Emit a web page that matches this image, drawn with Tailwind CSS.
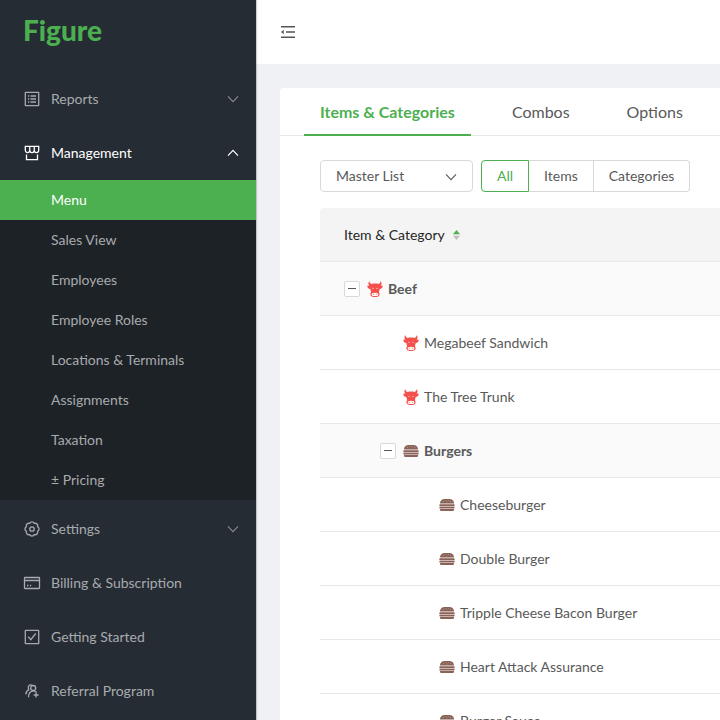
<!DOCTYPE html>
<html lang="en">
<head>
<meta charset="utf-8">
<meta name="viewport" content="width=device-width, initial-scale=1">
<title>Figure – Menu</title>
<script src="https://cdn.jsdelivr.net/npm/@tailwindcss/browser@4"></script>
</head>
<body class="h-screen overflow-hidden bg-[#f0f1f5] font-['Lato','Noto_Sans',sans-serif] text-sm leading-6 text-[#595959]">
<svg class="hidden" aria-hidden="true">
  <symbol id="down" viewBox="0 0 12 12"><path d="M1 3.300 6 8.700l5-5.400" fill="none" stroke="currentColor" stroke-width="1.100"/></symbol>
  <symbol id="up" viewBox="0 0 12 12"><path d="M1 8.700 6 3.300l5 5.400" fill="none" stroke="currentColor" stroke-width="1.200"/></symbol>
  <symbol id="cow" viewBox="0 0 16 16">
    <path fill="#f4504c" d="M2.300 0C1 2 1.200 3.600 2.400 4.600L.2 4.800C.5 7 1.600 8 3.300 8.100l.8 3.100C3.400 12 3.200 13 3.500 14c.5 1.400 2.100 2 4.500 2s4-.6 4.500-2c.3-1 .1-2-.6-2.800l.8-3.100C14.400 8 15.500 7 15.800 4.800l-2.200-.2C14.800 3.600 15 2 13.700 0c-.1 1.500-.8 2.500-2.200 2.900C9.300 2.300 6.700 2.300 4.500 2.900 3.100 2.500 2.400 1.500 2.300 0z"/>
    <ellipse cx="8" cy="13.400" rx="3.400" ry="1.600" fill="#fff"/>
    <circle cx="6" cy="7.300" r=".55" fill="#fff"/><circle cx="10" cy="7.300" r=".55" fill="#fff"/>
    <circle cx="6.700" cy="13.200" r=".5" fill="#f4504c"/><circle cx="9.300" cy="13.200" r=".5" fill="#f4504c"/>
  </symbol>
  <symbol id="burger" viewBox="0 0 16 16">
    <g fill="#8a6257"><path d="M1 6.500C1 3.500 3 2 5.500 2h5C13 2 15 3.500 15 6.500z"/><rect x=".3" y="7.200" width="15.400" height="2" rx=".8"/><rect x=".3" y="9.800" width="15.400" height="1.700" rx=".7"/><path d="M1 12.100h14v.4c0 1-.6 1.500-1.600 1.500H2.600C1.600 14 1 13.500 1 12.500z"/></g>
    <g fill="#d8c6c0"><circle cx="4.500" cy="4.300" r=".45"/><circle cx="6.800" cy="3.400" r=".45"/><circle cx="8" cy="4.900" r=".45"/><circle cx="9.300" cy="3.400" r=".45"/><circle cx="11.500" cy="4.300" r=".45"/></g>
  </symbol>
</svg>
<div class="flex h-full">
  <aside class="relative z-10 w-64 shrink-0 bg-[#262c34] text-[#a8abae] shadow-[1px_0_1px_rgba(0,21,41,0.2)]">
    <a href="#" class="flex h-[72px] items-start px-[23px] pt-3 text-[28px] leading-9 font-black text-[#4caf50]">Figure</a>
    <nav aria-label="Main">
      <button type="button" aria-expanded="false" class="flex h-[54px] w-full items-center gap-[11px] pr-[17px] pl-6 text-left">
        <svg class="size-4 shrink-0 overflow-visible" viewBox="0 0 16 16" fill="none" stroke="currentColor" stroke-width="1.300"><rect x="1.300" y="1.300" width="13.400" height="13.400" rx=".5"/><path d="M6.500 5h5.500M6.500 8h5.500M6.500 11h5.500M4 5h1.300M4 8h1.300M4 11h1.300"/></svg>
        <span class="grow">Reports</span><svg class="size-3 text-[#868b90]"><use href="#down"/></svg>
      </button>
      <button type="button" aria-expanded="true" class="flex h-[54px] w-full items-center gap-[11px] pr-[17px] pl-6 text-left text-white">
        <svg class="size-4 shrink-0 overflow-visible" viewBox="0 0 16 16" fill="none" stroke="currentColor" stroke-width="1.300"><path d="M1.300 1.300h13.400v4a2.230 2.230 0 0 1-4.460 0 2.230 2.230 0 0 1-4.480 0 2.230 2.230 0 0 1-4.460 0zM5.760 1.300v4M10.240 1.300v4M2.500 9.500v5.100h11V9.500"/></svg>
        <span class="grow">Management</span><svg class="size-3"><use href="#up"/></svg>
      </button>
      <ul class="mb-0.5 bg-[#1d2226]">
        <li><a href="#" aria-current="page" class="flex h-10 items-center bg-[#4caf50] pl-[51px] text-white">Menu</a></li>
        <li><a href="#" class="flex h-10 items-center pl-[51px]">Sales View</a></li>
        <li><a href="#" class="flex h-10 items-center pl-[51px]">Employees</a></li>
        <li><a href="#" class="flex h-10 items-center pl-[51px]">Employee Roles</a></li>
        <li><a href="#" class="flex h-10 items-center pl-[51px]">Locations &amp; Terminals</a></li>
        <li><a href="#" class="flex h-10 items-center pl-[51px]">Assignments</a></li>
        <li><a href="#" class="flex h-10 items-center pl-[51px]">Taxation</a></li>
        <li><a href="#" class="flex h-10 items-center pl-[51px]">± Pricing</a></li>
      </ul>
      <button type="button" aria-expanded="false" class="flex h-[54px] w-full items-center gap-[11px] pr-[17px] pl-6 text-left">
        <svg class="size-4 shrink-0 overflow-visible" viewBox="0 0 16 16" fill="none" stroke="currentColor" stroke-width="1.300" stroke-linejoin="round"><circle cx="8" cy="8" r="2.200"/><path d="M5.700 2.450A2.500 2.500 0 0 1 10.300 2.450A2.500 2.500 0 0 1 13.550 5.700A2.500 2.500 0 0 1 13.550 10.300A2.500 2.500 0 0 1 10.300 13.550A2.500 2.500 0 0 1 5.700 13.550A2.500 2.500 0 0 1 2.450 10.300A2.500 2.500 0 0 1 2.450 5.700A2.500 2.500 0 0 1 5.700 2.450z"/></svg>
        <span class="grow">Settings</span><svg class="size-3 text-[#868b90]"><use href="#down"/></svg>
      </button>
      <a href="#" class="flex h-[54px] items-center gap-[11px] px-6">
        <svg class="size-4 shrink-0 overflow-visible" viewBox="0 0 16 16" fill="none" stroke="currentColor" stroke-width="1.300"><rect x=".5" y="2.500" width="15" height="11" rx=".5"/><path d="M.5 5.500h15" stroke-width="1.500"/><path d="M3 10.500h1.500M6 10.500h1.200"/></svg>
        Billing &amp; Subscription
      </a>
      <a href="#" class="flex h-[54px] items-center gap-[11px] px-6">
        <svg class="size-4 shrink-0 overflow-visible" viewBox="0 0 16 16" fill="none" stroke="currentColor" stroke-width="1.300"><rect x="1.300" y="1.300" width="13.400" height="13.400" rx=".5"/><path d="m4.200 7.800 2.600 2.900 4.900-6.200"/></svg>
        Getting Started
      </a>
      <a href="#" class="flex h-[54px] items-center gap-[11px] px-6">
        <svg class="size-4 shrink-0 overflow-visible" viewBox="0 0 16 16" fill="none" stroke="currentColor" stroke-width="1.300"><path d="M5.200 6.400A2.400 2.400 0 1 1 8.400 2.500M5.200 6.400C3.100 7.300 2 9 1.800 11.400"/><circle cx="9.200" cy="5" r="2.500"/><path d="M4.500 14.200c0-3.600 1.900-6 4.700-6.300 1.500 0 2.500.5 3.300 1.400M9.600 12h5M12.100 9.600v4.900"/></svg>
        Referral Program
      </a>
    </nav>
  </aside>

  <div class="flex min-w-0 grow flex-col">
    <header class="flex h-16 shrink-0 items-center bg-white px-6">
      <button type="button" aria-label="Collapse menu">
        <svg class="size-4" viewBox="0 0 16 16" fill="none" stroke="#555" stroke-width="1.500"><path d="M1 2.700h14M6 8h9M1 13.300h14"/><path d="M1 8 3.700 5.800v4.400z" fill="#555" stroke="none"/></svg>
      </button>
    </header>
    <main class="min-h-0 grow overflow-hidden pt-6 pl-6">
      <div class="min-h-full rounded-tl-sm bg-white">
        <div role="tablist" class="flex h-12 gap-[25px] border-b border-[#e8e8e8] pl-6 text-base">
          <button type="button" role="tab" aria-selected="true" class="h-12 border-b-2 border-[#4caf50] px-4 pt-0.5 font-bold text-[#4caf50]">Items &amp; Categories</button>
          <button type="button" role="tab" aria-selected="false" class="h-12 border-b-2 border-transparent px-4 pt-0.5">Combos</button>
          <button type="button" role="tab" aria-selected="false" class="h-12 border-b-2 border-transparent px-4 pt-0.5">Options</button>
        </div>
        <div class="pt-6 pl-10">
          <div class="flex gap-2">
            <div class="relative">
              <select aria-label="List" class="h-8 w-[153px] appearance-none rounded border border-[#d9d9d9] bg-white px-[15px]"><option>Master List</option></select>
              <svg class="pointer-events-none absolute top-[11px] right-4 size-3"><use href="#down"/></svg>
            </div>
            <div role="group" aria-label="Show" class="flex">
              <button type="button" aria-pressed="true" class="h-8 rounded-l border border-[#4caf50] px-[15px] text-[#4caf50]">All</button>
              <button type="button" aria-pressed="false" class="h-8 border-y border-r border-[#d9d9d9] px-[15px]">Items</button>
              <button type="button" aria-pressed="false" class="h-8 rounded-r border-y border-r border-[#d9d9d9] px-[15px]">Categories</button>
            </div>
          </div>
          <table class="mt-4 w-full border-separate border-spacing-0">
            <thead>
              <tr><th scope="col" aria-sort="ascending" class="h-[54px] rounded-tl border-b border-[#e8e8e8] bg-[#f4f4f4] pl-6 text-left font-normal text-[#262626]">
                <button type="button" class="flex items-center gap-2">Item &amp; Category
                  <svg class="h-3 w-[7px]" viewBox="0 0 7 12"><path d="M0 5.300 3.500 1 7 5.300z" fill="#4caf50"/><path d="M0 6.700 3.500 11 7 6.700z" fill="#bfbfbf"/></svg></button></th></tr>
            </thead>
            <tbody>
              <tr class="bg-[#fafafa]"><td class="h-[54px] border-b border-[#e8e8e8] pl-6"><div class="flex items-center"><button type="button" aria-label="Collapse Beef" class="mr-[7px] flex size-4 items-center justify-center rounded-xs border border-[#d9d9d9] bg-white"><span class="h-px w-2 bg-[#595959]"></span></button><svg class="mr-[5px] size-4"><use href="#cow"/></svg><b>Beef</b></div></td></tr>
              <tr><td class="h-[54px] border-b border-[#e8e8e8] pl-[83px]"><div class="flex items-center gap-[5px]"><svg class="size-4"><use href="#cow"/></svg>Megabeef Sandwich</div></td></tr>
              <tr><td class="h-[54px] border-b border-[#e8e8e8] pl-[83px]"><div class="flex items-center gap-[5px]"><svg class="size-4"><use href="#cow"/></svg>The Tree Trunk</div></td></tr>
              <tr class="bg-[#fafafa]"><td class="h-[54px] border-b border-[#e8e8e8] pl-[60px]"><div class="flex items-center"><button type="button" aria-label="Collapse Burgers" class="mr-[7px] flex size-4 items-center justify-center rounded-xs border border-[#d9d9d9] bg-white"><span class="h-px w-2 bg-[#595959]"></span></button><svg class="mr-[5px] size-4"><use href="#burger"/></svg><b>Burgers</b></div></td></tr>
              <tr><td class="h-[54px] border-b border-[#e8e8e8] pl-[119px]"><div class="flex items-center gap-[5px]"><svg class="size-4"><use href="#burger"/></svg>Cheeseburger</div></td></tr>
              <tr><td class="h-[54px] border-b border-[#e8e8e8] pl-[119px]"><div class="flex items-center gap-[5px]"><svg class="size-4"><use href="#burger"/></svg>Double Burger</div></td></tr>
              <tr><td class="h-[54px] border-b border-[#e8e8e8] pl-[119px]"><div class="flex items-center gap-[5px]"><svg class="size-4"><use href="#burger"/></svg>Tripple Cheese Bacon Burger</div></td></tr>
              <tr><td class="h-[54px] border-b border-[#e8e8e8] pl-[119px]"><div class="flex items-center gap-[5px]"><svg class="size-4"><use href="#burger"/></svg>Heart Attack Assurance</div></td></tr>
              <tr><td class="h-[54px] border-b border-[#e8e8e8] pl-[119px]"><div class="flex items-center gap-[5px]"><svg class="size-4"><use href="#burger"/></svg>Burger Sauce</div></td></tr>
            </tbody>
          </table>
        </div>
      </div>
    </main>
  </div>
</div>
</body>
</html>
